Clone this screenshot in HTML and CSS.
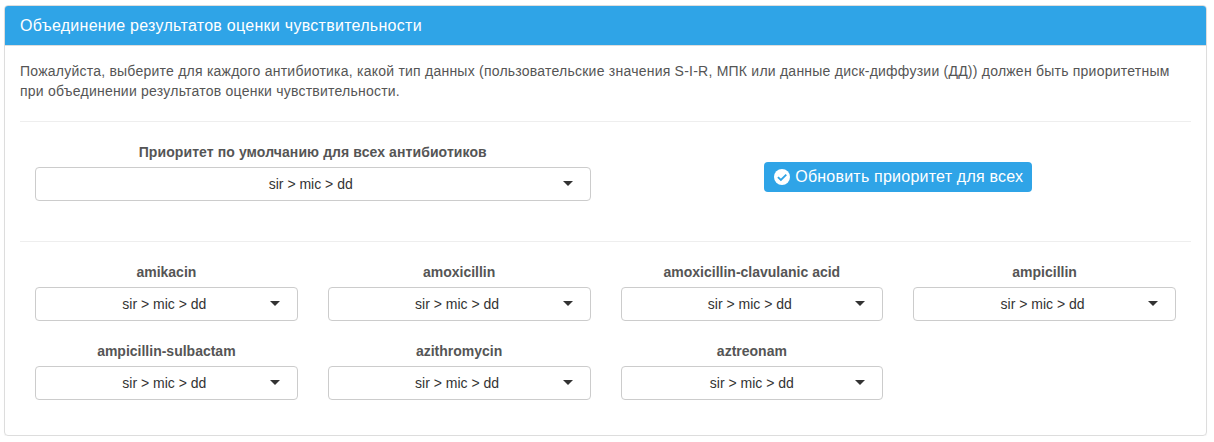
FILE: index.html
```html
<!DOCTYPE html>
<html lang="ru">
<head>
<meta charset="utf-8">
<title>Объединение результатов оценки чувствительности</title>
<link rel="stylesheet" href="styles.css">
</head>
<body>
<section class="panel">
  <header class="panel-heading">Объединение результатов оценки чувствительности</header>
  <div class="panel-body">
    <p class="intro"><span class="line">Пожалуйста, выберите для каждого антибиотика, какой тип данных (пользовательские значения S-I-R, МПК или данные диск-диффузии (ДД)) должен быть приоритетным</span><span class="line">при объединении результатов оценки чувствительности.</span></p>
    <hr>
    <div class="row row-default">
      <div class="field"><label class="label-default">Приоритет по умолчанию для всех антибиотиков</label><button class="select"><span>sir &gt; mic &gt; dd</span><i class="caret"></i></button></div>
      <div class="action"><button class="update"><svg class="check" viewBox="0 0 16 16"><circle cx="8" cy="8" r="8" fill="#fff"/><path d="M3.9 8.1 6.9 11 12.3 5.7" fill="none" stroke="#2fa4e7" stroke-width="1.8"/></svg><span>Обновить приоритет для всех</span></button></div>
    </div>
    <hr>
    <div class="row grid">
      <div class="field"><label>amikacin</label><button class="select"><span>sir &gt; mic &gt; dd</span><i class="caret"></i></button></div>
      <div class="field"><label>amoxicillin</label><button class="select"><span>sir &gt; mic &gt; dd</span><i class="caret"></i></button></div>
      <div class="field"><label>amoxicillin-clavulanic acid</label><button class="select"><span>sir &gt; mic &gt; dd</span><i class="caret"></i></button></div>
      <div class="field"><label>ampicillin</label><button class="select"><span>sir &gt; mic &gt; dd</span><i class="caret"></i></button></div>
      <div class="field"><label>ampicillin-sulbactam</label><button class="select"><span>sir &gt; mic &gt; dd</span><i class="caret"></i></button></div>
      <div class="field"><label>azithromycin</label><button class="select"><span>sir &gt; mic &gt; dd</span><i class="caret"></i></button></div>
      <div class="field"><label>aztreonam</label><button class="select select-last"><span>sir &gt; mic &gt; dd</span><i class="caret"></i></button></div>
    </div>
  </div>
</section>
</body>
</html>
```
FILE: styles.css
```css
* { box-sizing: border-box; }
body { margin: 0; padding: 5px 7px 0 4px; background: #fff; color: #555; font: 14px/20px "Liberation Sans", Arial, sans-serif; }
.panel { height: 431px; border: 1px solid #ddd; border-radius: 4px; box-shadow: 0 1px 1px rgba(0,0,0,.05); }
.panel-heading { height: 40px; padding: 10px 15px 9px; border-bottom: 1px solid #ddd; border-radius: 3px 3px 0 0; background: #2fa4e7; color: #fff; font-size: 16px; line-height: 20px; letter-spacing: .28px; }
.panel-body { padding: 15px 15px; }
.intro { margin: 0; letter-spacing: .23px; }
.line { display: block; white-space: nowrap; }
hr { height: 1px; margin: 20px 0; border: 0; background: #eee; }
.row { padding: 0 15px; }
.row-default { display: grid; grid-template-columns: 1fr 1fr; column-gap: 30px; height: 79px; }
.grid { display: grid; grid-template-columns: repeat(4, 1fr); column-gap: 30px; row-gap: 20px; }
.field { text-align: center; }
label { display: block; height: 25px; font-weight: 700; white-space: nowrap; }
.label-default { letter-spacing: .09px; }
.select { display: block; position: relative; width: 100%; height: 34px; padding: 6px 16px 6px 12px; border: 1px solid #ccc; border-radius: 4px; background: #fff; color: #333; font: inherit; }
.select-last { padding-right: 12px; }
.caret { position: absolute; right: 17px; top: 13px; border: 5px solid transparent; border-top-color: #333; border-bottom: 0; }
.action { display: flex; justify-content: center; align-items: flex-start; padding-top: 20px; }
.update { display: flex; align-items: center; gap: 5px; width: 268px; height: 30px; padding: 0 10px; border: 0; border-radius: 4px; background: #2fa4e7; color: #fff; font: 16px/20px "Liberation Sans", Arial, sans-serif; letter-spacing: .22px; white-space: nowrap; }
.check { width: 16px; height: 16px; flex: none; }
```
